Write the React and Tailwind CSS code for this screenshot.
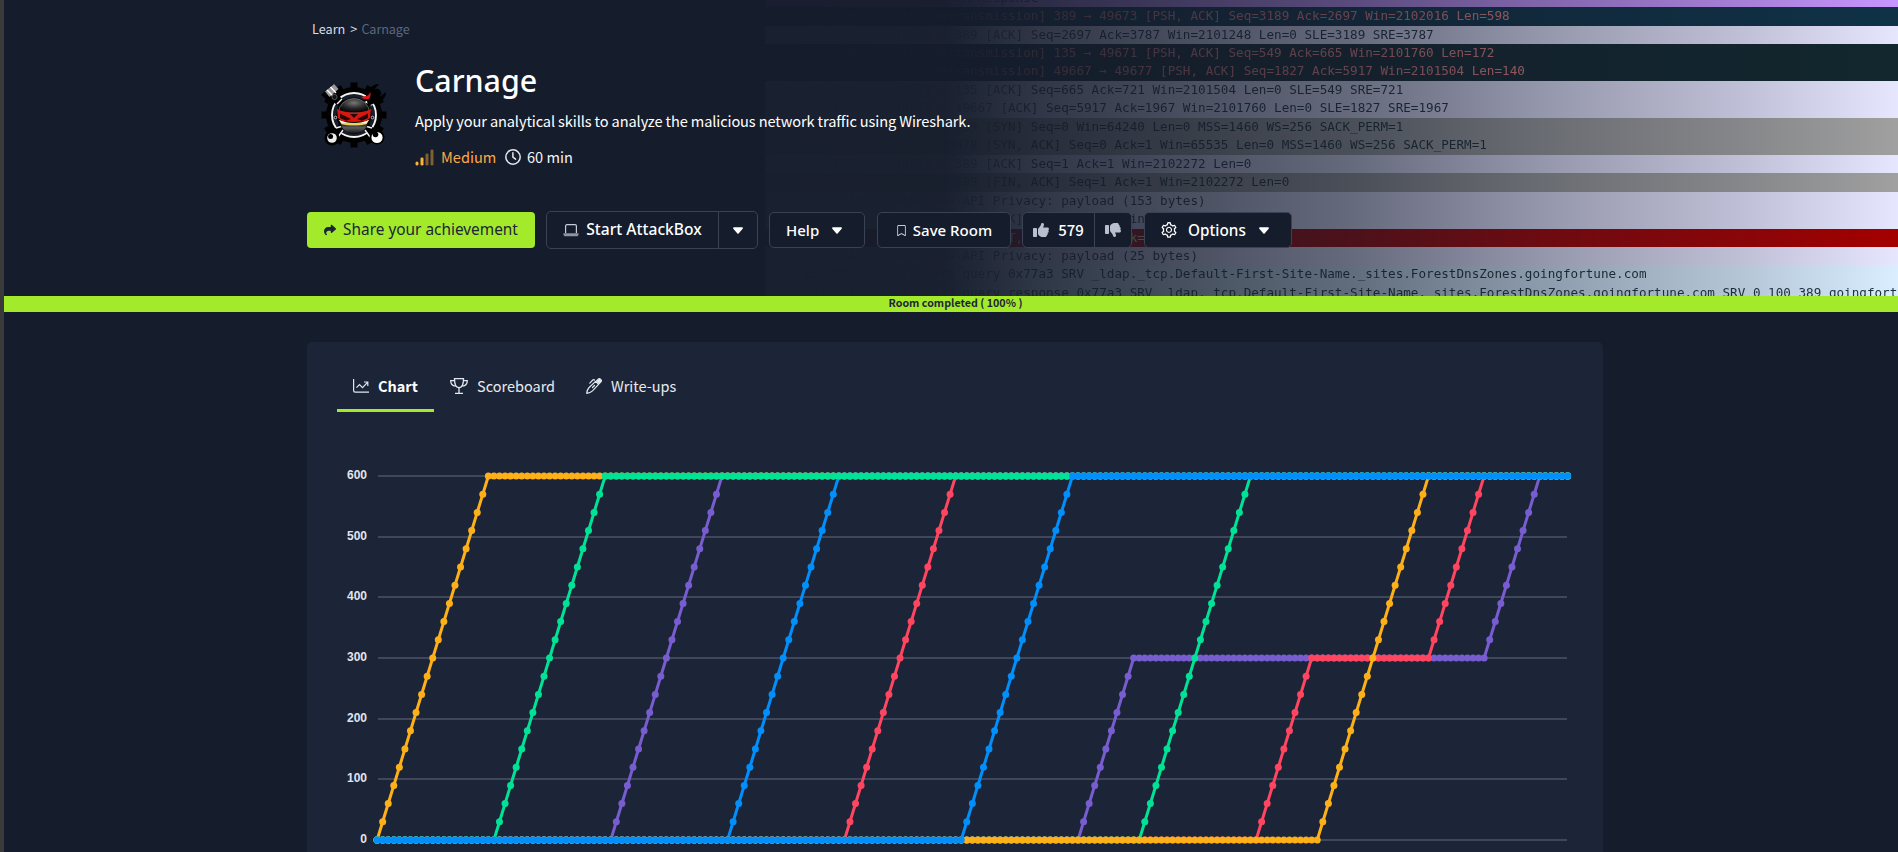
import React from "react";
import { BsBookmark } from "react-icons/bs";
import { AiOutlineSetting } from "react-icons/ai";
import { FaShare, FaThumbsUp, FaThumbsDown } from "react-icons/fa6";

const DARK = "text-[#12272e]";

const PACKETS = [
  ["bg-[#c896ff]", DARK, "148", "SRVR", "      SRVR Response"],
  ["bg-[#0f3247]", "text-[#f78787]", "65", "TCP", "[TCP Retransmission] 389 → 49673 [PSH, ACK] Seq=3189 Ack=2697 Win=2102016 Len=598"],
  ["bg-[#e7e6ff]", DARK, "66", "TCP", "49673 → 389 [ACK] Seq=2697 Ack=3787 Win=2101248 Len=0 SLE=3189 SRE=3787"],
  ["bg-[#12272e]", "text-[#f78787]", "226", "TCP", "[TCP Retransmission] 135 → 49671 [PSH, ACK] Seq=549 Ack=665 Win=2101760 Len=172"],
  ["bg-[#12272e]", "text-[#f78787]", "194", "TCP", "[TCP Retransmission] 49667 → 49677 [PSH, ACK] Seq=1827 Ack=5917 Win=2101504 Len=140"],
  ["bg-[#e7e6ff]", DARK, "66", "TCP", "49671 → 135 [ACK] Seq=665 Ack=721 Win=2101504 Len=0 SLE=549 SRE=721"],
  ["bg-[#e7e6ff]", DARK, "66", "TCP", "49677 → 49667 [ACK] Seq=5917 Ack=1967 Win=2101760 Len=0 SLE=1827 SRE=1967"],
  ["bg-[#a0a0a0]", DARK, "66", "TCP", "49678 → 389 [SYN] Seq=0 Win=64240 Len=0 MSS=1460 WS=256 SACK_PERM=1"],
  ["bg-[#a0a0a0]", DARK, "66", "TCP", "389 → 49678 [SYN, ACK] Seq=0 Ack=1 Win=65535 Len=0 MSS=1460 WS=256 SACK_PERM=1"],
  ["bg-[#e7e6ff]", DARK, "54", "TCP", "49678 → 389 [ACK] Seq=1 Ack=1 Win=2102272 Len=0"],
  ["bg-[#a0a0a0]", DARK, "54", "TCP", "49678 → 389 [FIN, ACK] Seq=1 Ack=1 Win=2102272 Len=0"],
  ["bg-[#e7e6ff]", DARK, "271", "LDAP", "SASL GSS-API Privacy: payload (153 bytes)"],
  ["bg-[#e7e6ff]", DARK, "54", "TCP", "49678 → 389 [ACK] Seq=2 Ack=2 Win=2102272 Len=0"],
  ["bg-[#a40000]", "text-[#fffc9c]", "54", "TCP", "49678 → 389 [RST, ACK] Seq=2 Ack=2 Win=0 Len=0"],
  ["bg-[#e7e6ff]", DARK, "143", "LDAP", "SASL GSS-API Privacy: payload (25 bytes)"],
  ["bg-[#daeeff]", DARK, "133", "DNS", "Standard query 0x77a3 SRV _ldap._tcp.Default-First-Site-Name._sites.ForestDnsZones.goingfortune.com"],
  ["bg-[#daeeff]", DARK, "201", "DNS", "Standard query response 0x77a3 SRV _ldap._tcp.Default-First-Site-Name._sites.ForestDnsZones.goingfortune.com SRV 0 100 389 goingfortune"],
];

function PacketBackdrop() {
  return (
    <div className="absolute top-0 right-0 h-[296px] w-[1133px] overflow-hidden">
      <div className="-mt-[11.4px]">
        {PACKETS.map(([bg, fg, len, proto, info], i) => (
          <div key={i} className={`h-[18.46px] ${bg}`}>
            <div
              className={`flex h-full items-start whitespace-pre font-['DejaVu_Sans_Mono',monospace] text-[12.64px] leading-[17.4px] [mask-image:linear-gradient(90deg,rgba(0,0,0,0.3)_0%,rgba(0,0,0,0.4)_15%,rgba(0,0,0,0.95)_24%)] ${fg}`}
            >
              <span className="w-[61px] shrink-0 text-right">{len}</span>
              <span className="ml-[7px] w-[61px] shrink-0">{proto}</span>
              <span>{info}</span>
            </div>
          </div>
        ))}
      </div>
      <div className="absolute inset-0 bg-[linear-gradient(90deg,rgba(21,28,43,0.98)_0%,rgba(21,28,43,0.975)_16%,rgba(21,28,43,0.87)_24%,rgba(21,28,43,0.61)_52%,rgba(21,28,43,0.4)_68%,rgba(21,28,43,0.18)_87%,rgba(21,28,43,0)_100%)]" />
    </div>
  );
}

function RoomLogo() {
  return (
    <svg viewBox="0 0 66 66" className="h-[66px] w-[66px]">
      <g fill="#000">
        <circle cx="33" cy="33" r="28" />
        {[0, 30, 60, 90, 120, 150, 180, 210, 240, 270, 300, 330].map((a) => (
          <rect key={a} x="29.5" y="0.5" width="7" height="9" transform={`rotate(${a} 33 33)`} />
        ))}
      </g>
      <circle cx="33" cy="33" r="22" fill="#161d2b" stroke="#f4f4f4" strokeWidth="1.9" />
      <circle cx="33" cy="33" r="17.5" fill="#000" />
      <g stroke="#000" strokeWidth="8" strokeLinecap="round">
        <path d="M10 12 56 55M56 11 11 55" />
      </g>
      <path d="M15 46 22 44M51 46 44 44M16 22 21 17M51 23 45 20 52 17M22 48l-5 7M44 48l5 7" stroke="#f4f4f4" strokeWidth="1.4" fill="none" />
      <circle cx="14.5" cy="35.5" r="1.3" fill="#000" stroke="#ddd" strokeWidth="0.8" />
      <circle cx="51.5" cy="35.5" r="1.3" fill="#000" stroke="#ddd" strokeWidth="0.8" />
      <circle cx="11" cy="56" r="7.5" fill="#000" />
      <circle cx="11" cy="56" r="4.8" fill="#eee" />
      <circle cx="9.6" cy="54.4" r="2.5" fill="#000" />
      <circle cx="56" cy="55" r="7.5" fill="#000" />
      <circle cx="56" cy="55.5" r="5.6" fill="#fff" />
      <circle cx="54.5" cy="52.5" r="2.8" fill="#000" />
      <path d="M0 13 12 2l9 10-10 10z" fill="#000" />
      <path d="m4 9.5 9-7.500 4.500 5-9 8z" fill="#9a9a9a" />
      <path d="m6 8 5.500 5.500M9.500 5l5.500 6" stroke="#fff" strokeWidth="1.3" />
      <circle cx="13.5" cy="15" r="2.6" fill="#111" stroke="#666" strokeWidth="0.8" />
      <path d="M45 14c2-8 7-12 13-12l-5 6 2 5 5 1 5-4c0 6-5 11-11 11l-7 3z" fill="#000" />
      <path d="m40 15 7-1.500 2.500-3.500 0 4-1.500 3-5 0z" fill="#e01515" />
      <defs>
        <radialGradient id="hood" cx="0.5" cy="0.3" r="0.6">
          <stop offset="0" stopColor="#777" />
          <stop offset="0.6" stopColor="#2b2b2b" />
          <stop offset="1" stopColor="#0a0a0a" />
        </radialGradient>
        <linearGradient id="mask" x1="0" y1="0" x2="0" y2="1">
          <stop offset="0" stopColor="#1c1c1c" />
          <stop offset="0.4" stopColor="#5c5c5c" />
          <stop offset="1" stopColor="#161616" />
        </linearGradient>
      </defs>
      <ellipse cx="33" cy="34" rx="16" ry="18" fill="#080808" />
      <path d="M17.500 31a15.500 14.500 0 0 1 31 0z" fill="url(#hood)" stroke="#8a8a8a" strokeWidth="0.6" />
      <path d="M20 42c8 2 18 2 26 0l-1.500 4c-4 7-19 7-23 0z" fill="url(#mask)" />
      <path d="M18 38c9 4 21 4 30 0l-2.500 4.200c-7 1.800-18 1.800-25 0z" fill="#efce62" />
      <path d="M18 38l8 2.800-5 .8zM48 38l-8 2.800 5 .8z" fill="#fffbe8" />
      <path d="M16 27c10 5 24 5 34 0l-1 9-4 3-12 1-12-1-4-3z" fill="#d9170f" />
      <path d="M19 31.500l11 5.500-5 1.800-6-2.800zM47 31.500l-11 5.500 5 1.800 6-2.800zM29 32h8l-4 4z" fill="#2a0404" />
    </svg>
  );
}

function SignalIcon() {
  return (
    <svg viewBox="0 0 19 17" className="h-[17px] w-[19px]" fill="#ffb238">
      <rect x="0.5" y="12.5" width="3" height="4" rx="1.5" />
      <rect x="5.5" y="8.5" width="3" height="8" rx="1.3" />
      <rect x="10.5" y="4.5" width="3" height="12" rx="1.3" opacity="0.45" />
      <rect x="15.5" y="0.5" width="3" height="16" rx="1.3" opacity="0.45" />
    </svg>
  );
}

function ClockIcon() {
  return (
    <svg viewBox="0 0 16 16" className="h-4 w-4" fill="none" stroke="#e6e8ee" strokeWidth="1.5" strokeLinecap="round" strokeLinejoin="round">
      <circle cx="8" cy="8" r="7.2" />
      <path d="M7.900 3.800v4.400l2.700 1.900" />
    </svg>
  );
}

function LaptopIcon() {
  return (
    <svg viewBox="0 0 16 13" className="h-[13px] w-4">
      <path d="M2.600 9V2.100C2.600 1.300 3.100.7 3.900.7h8.200c.8 0 1.300.6 1.300 1.400V9" fill="none" stroke="#c8ccd6" strokeWidth="1.2" />
      <path d="M0.500 9.200h15v1.300c0 1-.8 1.800-1.800 1.800H2.300c-1 0-1.800-.8-1.800-1.800z" fill="#8d93a1" />
    </svg>
  );
}

function Caret({ className = "" }) {
  return (
    <svg viewBox="0 0 10 7" className={`h-[7px] w-[10px] ${className}`} fill="currentColor">
      <path d="M1 .2h8c.8 0 1.200.9.700 1.500L5.800 6.200a1 1 0 0 1-1.600 0L.3 1.700C-.2 1.100.2.2 1 .2z" />
    </svg>
  );
}

function GraphIcon() {
  return (
    <svg viewBox="0 0 16 16" className="h-4 w-4" fill="none" stroke="#e3e6ee" strokeWidth="1.2">
      <path d="M0.600 1v11.500a1.600 1.600 0 0 0 1.600 1.600H16" />
      <path d="m3.500 9.600 3-3 3 3 5-5.300M11 4h3.800v4" />
    </svg>
  );
}

function TrophyIcon() {
  return (
    <svg viewBox="0 0 18 16" className="h-4 w-[18px]" fill="none" stroke="#e3e6ee" strokeWidth="1.3">
      <path d="M4.500 0.700h9c0 5-1.200 9-4.500 9s-4.500-4-4.500-9z" />
      <path d="M4.600 2.600H0.700c0 3.500 2 5.300 4.900 5.600M13.400 2.600h3.900c0 3.500-2 5.300-4.900 5.600" />
      <path d="M9 9.600v5.500M5 15.300h8" />
    </svg>
  );
}

function PenIcon() {
  return (
    <svg viewBox="0 0 16 16" className="h-4 w-4" fill="none" stroke="#e3e6ee" strokeWidth="1.2" strokeLinejoin="round" strokeLinecap="round">
      <path d="m9.600 3.400 3 3-6.100 6.500c-1.400 1.300-3.200 2.100-5.800 2.400.2-2.600 1-4.300 2.400-5.800z" />
      <path d="M10.500 3 12 1.400a1.900 1.900 0 0 1 2.700 2.700L13.200 5.600z" fill="#e3e6ee" />
      <path d="M3.800 5.200 6.800 2c.5-.5 1.200-.5 1.700 0M8.500 7.500l-2 2" />
    </svg>
  );
}

const X0 = 40.1;
const STEP = 5.563;
const LAST = 214;

// Each series is a colour and its [step, points] corners, painted back to front.
const SERIES = [
  ["#775dd0", [[0, 0], [126, 0], [136, 300], [199, 300], [209, 600], [214, 600]]],
  ["#ff4560", [[0, 0], [84, 0], [104, 600], [214, 600]]],
  ["#775dd0", [[0, 0], [42, 0], [62, 600], [214, 600]]],
  ["#ff4560", [[0, 0], [158, 0], [168, 300], [189, 300], [199, 600], [214, 600]]],
  ["#feb019", [[0, 0], [20, 600], [214, 600]]],
  ["#00e396", [[0, 0], [137, 0], [157, 600], [214, 600]]],
  ["#008ffb", [[0, 0], [63, 0], [83, 600], [214, 600]]],
  ["#feb019", [[0, 0], [169, 0], [189, 600], [214, 600]]],
  ["#00e396", [[0, 0], [21, 0], [41, 600], [214, 600]]],
  ["#008ffb", [[0, 0], [105, 0], [125, 600], [214, 600]]],
];

const px = (s) => X0 + s * STEP;
const py = (v) => 400 - (v * 364) / 600;

function valueAt(corners, s) {
  for (let i = 1; i < corners.length; i++) {
    const [s0, v0] = corners[i - 1];
    const [s1, v1] = corners[i];
    if (s <= s1) return v0 + ((v1 - v0) * (s - s0)) / (s1 - s0);
  }
  return corners[corners.length - 1][1];
}

function ScoreChart() {
  const steps = Array.from({ length: LAST + 1 }, (_, i) => i);
  return (
    <svg viewBox="0 0 1240 412" className="block h-[412px] w-[1240px]">
      {[0, 100, 200, 300, 400, 500, 600].map((v) => (
        <g key={v}>
          <line x1="41" x2="1230" y1={Math.round(py(v))} y2={Math.round(py(v))} stroke="#40475a" strokeWidth="2" />
          <text x="30" y={Math.round(py(v)) + 3} textAnchor="end" fill="#e1e4ea" className="font-['Liberation_Sans',sans-serif] text-[12px] font-bold">
            {v}
          </text>
        </g>
      ))}
      {SERIES.map(([color, corners], i) => (
        <g key={i}>
          <polyline points={corners.map(([s, v]) => `${px(s)},${py(v)}`).join(" ")} fill="none" stroke={color} strokeWidth="3" />
          {steps.map((s) => (
            <circle key={s} cx={px(s)} cy={py(valueAt(corners, s))} r="3.5" fill={color} />
          ))}
        </g>
      ))}
    </svg>
  );
}

const BTN = "flex shrink-0 items-center whitespace-nowrap border border-[#3a4356] bg-[#151c2b] font-['Noto_Sans',sans-serif] font-medium text-white";

export default function App() {
  return (
    <div className="h-[852px] w-[1898px] overflow-hidden border-l-4 border-[#3a3a3a] bg-[#151c2b] font-['Noto_Sans_CJK_SC',sans-serif]">
      <header className="relative h-[296px]">
        <PacketBackdrop />
        <div className="relative flex h-full flex-col pl-[303px]">
          <nav className="mt-[19px] flex h-5 items-center gap-[5px] pl-[5px] text-[12.7px] text-[#d9dde5]">
            <span>Learn</span>
            <span>&gt;</span>
            <span className="-ml-px tracking-[-0.01em] text-[#5c677d]">Carnage</span>
          </nav>
          <div className="mt-[21px] flex h-[116px]">
            <div className="ml-[14px] mt-[22px] w-[66px]">
              <RoomLogo />
            </div>
            <div className="ml-[28px] flex flex-col">
              <h1 className="h-[42px] font-['Noto_Sans',sans-serif] text-[30.4px] font-medium leading-[42px] text-white">Carnage</h1>
              <p className="mt-[8px] h-[22px] whitespace-nowrap text-[14.6px] leading-[22px] tracking-[-0.008em] text-white">
                Apply your analytical skills to analyze the malicious network traffic using Wireshark.
              </p>
              <div className="mt-[14px] flex h-[22px] items-center text-[14.6px] leading-[22px] text-[#f4f5f8]">
                <SignalIcon />
                <span className="ml-[7px] w-[54px] text-[#ffa945]">Medium</span>
                <span className="ml-[10px]"><ClockIcon /></span>
                <span className="ml-[6px]">60 min</span>
              </div>
            </div>
          </div>
          <div className="mt-[35px] flex h-[38px] items-center">
            <button className="flex h-9 w-[228px] items-center justify-center gap-[7px] rounded-[4px] bg-[#a3ea2a] font-['Noto_Sans',sans-serif] text-[15.4px] text-[#1c2538]">
              <FaShare className="h-3 w-3" />
              <span>Share your achievement</span>
            </button>
            <div className="ml-[11px] flex">
              <button className={`${BTN} h-[38px] w-[173px] justify-center gap-[7px] rounded-l-[5px] text-[15.6px]`}>
                <LaptopIcon />
                <span>Start AttackBox</span>
              </button>
              <button className={`${BTN} -ml-px h-[38px] w-10 justify-center rounded-r-[5px]`}>
                <Caret />
              </button>
            </div>
            <button className={`${BTN} ml-[11px] h-9 w-[96px] gap-[13px] rounded-[5px] pl-[16px] text-[15px]`}>
              <span>Help</span>
              <Caret />
            </button>
            <button className={`${BTN} ml-3 h-9 w-[134px] justify-center gap-[6px] rounded-[5px] text-[15px]`}>
              <BsBookmark className="h-[13px] w-[11px]" />
              <span>Save Room</span>
            </button>
            <div className="ml-[11px] flex">
              <button className={`${BTN} h-9 w-[73px] justify-center gap-[9px] rounded-l-[5px]`}>
                <FaThumbsUp className="h-4 w-4 text-[#b9bfcf]" />
                <span className="font-['Noto_Sans_CJK_SC',sans-serif] text-[15px]">579</span>
              </button>
              <button className={`${BTN} -ml-px h-9 w-[38px] justify-center rounded-r-[5px]`}>
                <FaThumbsDown className="h-4 w-4 text-[#b9bfcf]" />
              </button>
            </div>
            <button className={`${BTN} ml-[12px] h-9 w-[148px] rounded-[5px] pl-[15px] text-[15.3px]`}>
              <AiOutlineSetting className="h-[18px] w-[18px]" />
              <span className="ml-[10px]">Options</span>
              <Caret className="ml-[13px]" />
            </button>
          </div>
        </div>
      </header>

      <div className="flex h-4 items-center justify-center bg-[#a3ea2a] pl-[9px] text-[10.7px] font-bold leading-4 text-[#1c2538]">
        <span className="-mt-[2px]">Room completed ( 100% )</span>
      </div>

      <main className="ml-[303px] mt-[30px] w-[1296px] rounded-t-[5px] bg-[#1c2538] px-[30px] pt-[21px]">
        <div className="flex h-[49px] text-[14.5px] text-[#e8eaf0]">
          <div className="flex h-[49px] w-[97px] items-center border-b-[3px] border-[#a3ea2a] pl-4 font-bold text-white">
            <GraphIcon />
            <span className="ml-[9px]">Chart</span>
          </div>
          <div className="flex h-[46px] w-[136px] items-center pl-4">
            <TrophyIcon />
            <span className="ml-[9px]">Scoreboard</span>
          </div>
          <div className="flex h-[46px] items-center pl-4">
            <PenIcon />
            <span className="ml-[9px]">Write-ups</span>
          </div>
        </div>
        <div className="mt-[28px]">
          <ScoreChart />
        </div>
      </main>
    </div>
  );
}
